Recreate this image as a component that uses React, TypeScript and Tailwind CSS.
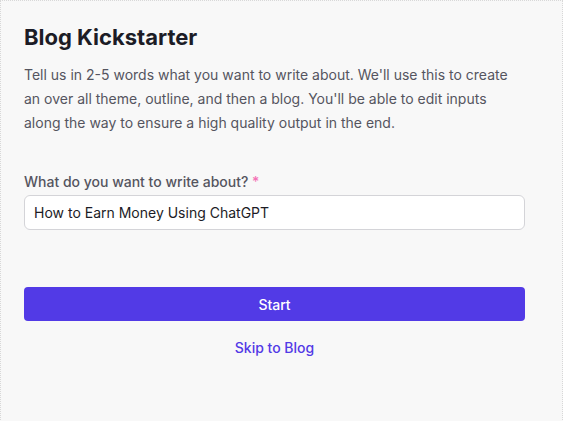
export default function App() {
  return (
    <div className="min-h-screen bg-white font-['Inter',sans-serif]">
      <div className="w-[563px] min-h-[440px] border border-dotted border-[#d8d8d8] bg-[#f8f8f8] px-[23px] pt-[21px]">
        <h1 className="text-[22px] font-bold leading-[30px] text-[#1c1c26]">Blog Kickstarter</h1>
        <p className="mt-[11px] max-w-[490px] text-[14px] leading-[24px] text-[#55555f]">
          Tell us in 2-5 words what you want to write about. We'll use this to create an over all theme,
          outline, and then a blog. You'll be able to edit inputs along the way to ensure a high quality
          output in the end.
        </p>

        <div className="mt-[37px] w-[501px]">
          <label className="block text-[14px] font-medium leading-[20px] text-[#55555f]">
            What do you want to write about? <span className="text-[#f472b6]">*</span>
          </label>
          <input
            defaultValue="How to Earn Money Using ChatGPT"
            className="mt-[3px] h-[35px] w-full rounded-[6px] border border-[#d4d4d8] bg-white px-[9px] text-[14px] text-[#1c1c26] outline-none"
          />
        </div>

        <div className="mt-[57px] flex w-[501px] flex-col items-center">
          <button className="h-[34px] w-full rounded-[4px] bg-[#523ae6] text-[14px] font-medium text-white">
            Start
          </button>
          <a className="mt-[17px] text-[14px] font-medium leading-[20px] text-[#523ae6]">Skip to Blog</a>
        </div>
      </div>
    </div>
  );
}
